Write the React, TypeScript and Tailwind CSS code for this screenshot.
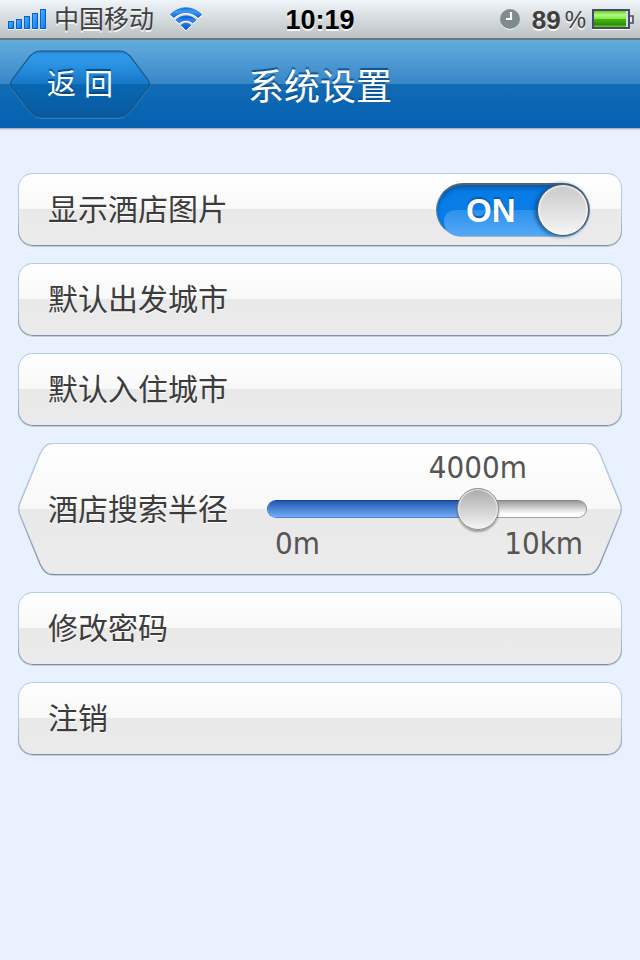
import { useId, useState } from "react";
import type { ReactNode } from "react";

const MAX_RADIUS = 10000;

/** The slider is finer at short distances than at long ones. */
function radiusAt(position: number) {
  return Math.round((MAX_RADIUS * Math.pow(position / 1000, 2.4)) / 100) * 100;
}

function SignalBars() {
  const heights = [7, 9, 12, 15, 19];
  return (
    <svg width="40" height="24" viewBox="0 0 40 24" aria-hidden="true">
      <defs>
        <linearGradient id="signal" x1="0" y1="0" x2="1" y2="1">
          <stop offset="0" stopColor="#4fb4ff" />
          <stop offset="1" stopColor="#0878ee" />
        </linearGradient>
      </defs>
      {heights.map((h, i) => (
        <g key={h}>
          <path d={`M${i * 8} 22.5h6`} stroke="#fff" strokeWidth="1" />
          <rect x={i * 8 + 0.5} y={21.5 - h} width="5" height={h} fill="url(#signal)" stroke="#0860cf" />
        </g>
      ))}
    </svg>
  );
}

function WifiIcon() {
  const shape = (
    <>
      <path d="M0.5 7.5C9.5-1.5 22.5-1.5 31.5 7.5L28.3 10.7C21 3.8 11 3.8 3.7 10.7Z" />
      <path d="M6 13C11.8 7.3 20.2 7.3 26 13L22.8 16.1C18.7 12.4 13.3 12.4 9.2 16.1Z" />
      <path d="M11.2 18.2C14 15.6 18 15.6 20.8 18.2L16 23Z" />
    </>
  );
  return (
    <svg width="32" height="25" viewBox="0 0 32 25" aria-hidden="true">
      <defs>
        <linearGradient id="wifi" gradientUnits="userSpaceOnUse" x1="0" y1="0" x2="0" y2="23">
          <stop offset="0" stopColor="#1269d8" />
          <stop offset="0.2" stopColor="#36a0f6" />
          <stop offset="0.45" stopColor="#1464e0" />
          <stop offset="0.6" stopColor="#2d8ef4" />
          <stop offset="1" stopColor="#0648cc" />
        </linearGradient>
      </defs>
      <g fill="#fff" transform="translate(0 1.5)">{shape}</g>
      <g fill="url(#wifi)" stroke="#0756cd" strokeWidth="0.6">{shape}</g>
    </svg>
  );
}

function ClockIcon() {
  return (
    <svg width="20" height="22" viewBox="0 0 20 22" aria-hidden="true">
      <circle cx="10" cy="12" r="9.7" fill="#fff" />
      <circle cx="10" cy="11" r="10" fill="#7f8b8d" />
      <path d="M11 4V11H6" fill="none" stroke="#fff" strokeWidth="2.2" />
    </svg>
  );
}

function BatteryIcon() {
  return (
    <svg width="42" height="22" viewBox="0 0 42 22" aria-hidden="true">
      <defs>
        <linearGradient id="battery" x1="0" y1="0" x2="0" y2="1">
          <stop offset="0" stopColor="#63d128" />
          <stop offset="0.25" stopColor="#b5fa80" />
          <stop offset="0.48" stopColor="#83e748" />
          <stop offset="0.52" stopColor="#41bb0c" />
          <stop offset="0.85" stopColor="#2d8d04" />
          <stop offset="1" stopColor="#74ce3e" />
        </linearGradient>
      </defs>
      <path d="M0 21.5h38" stroke="#fff" strokeWidth="1" />
      <rect x="1" y="2" width="36" height="18" fill="#d5d9e2" stroke="#454b66" strokeWidth="2" />
      <rect x="2" y="3" width="32" height="16" fill="url(#battery)" />
      <path d="M38 8h3v7h-3" fill="#e4e6ec" stroke="#454b66" strokeWidth="1.6" />
    </svg>
  );
}

function StatusBar() {
  return (
    <div className="grid h-10 grid-cols-[1fr_auto_1fr] items-center border-b-2 border-[#6f7578] bg-linear-to-b from-[#eff5f8] to-[#bcc1c4] px-2 text-[#3f3f3f] [text-shadow:0_2px_0_#f4f6f7]">
      <div className="flex items-center">
        <SignalBars />
        <span className="ml-1.5 text-[25px]/8">中国移动</span>
        <span className="ml-4">
          <WifiIcon />
        </span>
      </div>
      <time className="pt-0.5 text-[27px]/8 font-bold text-black">10:19</time>
      <div className="-mr-0.5 flex items-center justify-end">
        <ClockIcon />
        <span className="ml-3 pt-0.5 text-[26px]/8 font-bold">89</span>
        <span className="mr-1.5 ml-1 pt-0.5 text-[24px]/8">%</span>
        <BatteryIcon />
      </div>
    </div>
  );
}

function BackButton() {
  return (
    <button type="button" className="relative h-[68px] w-[142px] pt-1 text-[29px] text-white [text-shadow:0_-2px_1px_#064a86]">
      <svg className="absolute inset-0" width="142" height="70" viewBox="0 0 142 70" aria-hidden="true">
        <defs>
          <linearGradient id="back" x1="0" y1="0" x2="0" y2="1">
            <stop offset="0" stopColor="#2580cc" />
            <stop offset="0.06" stopColor="#3098e9" />
            <stop offset="0.2" stopColor="#2b93e4" />
            <stop offset="0.5" stopColor="#1577c4" />
            <stop offset="0.51" stopColor="#0767b2" />
            <stop offset="1" stopColor="#0a5a9f" />
          </linearGradient>
        </defs>
        <path d="M32 1H110Q116 1 121 6L139 30Q142 34 139 38L121 61Q116 67 110 67H32Q26 67 21 61L3 38Q0 34 3 30L21 6Q26 1 32 1Z" fill="none" stroke="#5aa7e0" strokeOpacity="0.6" transform="translate(0 1.3)" />
        <path d="M32 1H110Q116 1 121 6L139 30Q142 34 139 38L121 61Q116 67 110 67H32Q26 67 21 61L3 38Q0 34 3 30L21 6Q26 1 32 1Z" fill="url(#back)" stroke="#1b557f" strokeWidth="1.2" />
      </svg>
      <span className="relative">返 回</span>
    </button>
  );
}

function Header() {
  return (
    <header className="grid h-[89px] grid-cols-[1fr_auto_1fr] items-center border-b border-[#aab0ba] bg-[linear-gradient(#63acdd,#3787c8_50%,#136bb5_50%,#0361b0)] px-[9px] shadow-[0_1px_1px_#d5dbe6]">
      <BackButton />
      <h1 className="pt-2 text-[36px]/[48px] text-white [text-shadow:0_-2px_1px_#0b528f]">系统设置</h1>
    </header>
  );
}

const panel =
  "flex h-[73px] w-full items-center rounded-[15px] border border-transparent pr-[31px] pl-[29px] text-left text-[30px] text-[#3c3c3c] shadow-[0_1px_0_#c3ccdb] [background:linear-gradient(#fff,#f8f8f8_50%,#e9e9e9_50%,#ebebeb)_padding-box,linear-gradient(#b2cdec,#b2c5da_60%,#7f8fa3)_border-box] [text-shadow:0_1px_0_#fff]";

function SettingButton({ children }: { children: ReactNode }) {
  return (
    <button type="button" className={panel}>
      {children}
    </button>
  );
}

function PictureSetting() {
  const [on, setOn] = useState(true);
  return (
    <label className={`${panel} justify-between`}>
      <span>显示酒店图片</span>
      <span className="relative block h-[54px] w-[154px] shrink-0">
        <input
          type="checkbox"
          role="switch"
          checked={on}
          onChange={(e) => setOn(e.target.checked)}
          className="peer absolute inset-0 size-full cursor-pointer appearance-none rounded-full border-x border-t-2 border-b border-x-[#71818f] border-t-[#59626b] border-b-[#a2b6c8] bg-[#9aa3ad] shadow-[inset_0_4px_5px_-1px_#0558a8] checked:bg-[#087ce7]"
        />
        <span className="pointer-events-none absolute inset-x-2 top-[27px] bottom-px rounded-tl-[20px] rounded-b-[27px] bg-linear-to-b from-[#2b91ed] to-[#54a8f5]" />
        <span className="pointer-events-none absolute top-1/2 left-[30px] -translate-y-1/2 text-[33px] leading-none font-bold text-white [text-shadow:0_-2px_1px_#075da9]">
          {on ? "ON" : ""}
        </span>
        <span className="pointer-events-none absolute top-px left-px size-[52px] rounded-full border border-[#4f5963] bg-linear-to-b from-[#cacaca] to-[#f5f5f5] shadow-[inset_0_0_2px_1px_#fff] peer-checked:left-[101px] peer-checked:shadow-[inset_0_0_2px_1px_#fff,-2px_0_4px_#075296]" />
      </span>
    </label>
  );
}

function HexCap({ side }: { side: "left" | "right" }) {
  return (
    <svg className={side === "right" ? "-scale-x-100" : ""} width="36" height="133" viewBox="0 0 36 133" aria-hidden="true">
      <defs>
        <linearGradient id={`fill-${side}`} gradientUnits="userSpaceOnUse" x1="0" y1="0" x2="0" y2="132">
          <stop offset="0" stopColor="#fff" />
          <stop offset="0.5" stopColor="#f8f8f8" />
          <stop offset="0.5" stopColor="#e9e9e9" />
          <stop offset="1" stopColor="#ebebeb" />
        </linearGradient>
        <linearGradient id={`edge-${side}`} gradientUnits="userSpaceOnUse" x1="0" y1="0" x2="0" y2="132">
          <stop offset="0" stopColor="#b2cdec" />
          <stop offset="0.5" stopColor="#a9bdd5" />
          <stop offset="1" stopColor="#7f8fa3" />
        </linearGradient>
      </defs>
      <path
        d="M36 0.5H33Q27 0.5 22 11L1.5 61Q0 66 1.5 71L22 121Q27 131.5 33 131.5H36"
        fill={`url(#fill-${side})`}
        stroke={`url(#edge-${side})`}
        strokeWidth="1.4"
      />
    </svg>
  );
}

function RadiusSetting() {
  const id = useId();
  const [position, setPosition] = useState(683);
  const percent = position / 10;
  const thumb = `calc(21px + (100% - 42px) * ${percent / 100})`;
  return (
    <div className="relative h-[132px]">
      <div className="absolute inset-0 flex" aria-hidden="true">
        <HexCap side="left" />
        <div className="flex-1 border-t border-b border-t-[#b2cdec] border-b-[#7f8fa3] bg-[linear-gradient(#fff,#f8f8f8_50%,#e9e9e9_50%,#ebebeb)] shadow-[0_1px_0_#c3ccdb]" />
        <HexCap side="right" />
      </div>
      <div className="relative flex h-full items-center gap-[39px] pr-[35px] pl-[30px]">
        <label htmlFor={id} className="shrink-0 text-[30px] text-[#3c3c3c] [text-shadow:0_1px_0_#fff]">
          酒店搜索半径
        </label>
        <div className="flex-1 pb-2 font-['DejaVu_Sans_Condensed','DejaVu_Sans',sans-serif] text-[31px]/[34px] text-[#555]">
          <div className="relative h-[34px]">
            <output htmlFor={id} className="absolute -translate-x-1/2" style={{ left: thumb }}>
              {radiusAt(position)}m
            </output>
          </div>
          <input
            id={id}
            type="range"
            min="0"
            max="1000"
            value={position}
            onChange={(e) => setPosition(Number(e.target.value))}
            style={{ backgroundSize: `${percent}% 100%, 100% 100%, ${percent}% 100%, 100% 100%` }}
            className="mt-4 mb-2 block h-[18px] w-full cursor-pointer appearance-none rounded-full border border-transparent bg-no-repeat [background-clip:padding-box,padding-box,border-box,border-box] [background-image:linear-gradient(#2558ad,#4a81d3_50%,#72abf4),linear-gradient(#999,#dadada_50%,#fff_80%),linear-gradient(#0d459c,#4b86d6),linear-gradient(#858585,#a5a5a5)] [background-origin:padding-box,padding-box,border-box,border-box] [&::-webkit-slider-thumb]:size-[42px] [&::-webkit-slider-thumb]:appearance-none [&::-webkit-slider-thumb]:rounded-full [&::-webkit-slider-thumb]:border [&::-webkit-slider-thumb]:border-[#8c8c8c] [&::-webkit-slider-thumb]:bg-linear-to-b [&::-webkit-slider-thumb]:from-[#ababab] [&::-webkit-slider-thumb]:to-[#f5f5f5] [&::-webkit-slider-thumb]:shadow-[inset_0_0_1px_1px_#f4f4f4,0_2px_2px_#0005]"
          />
          <div className="flex justify-between pr-1 pl-2">
            <span>0m</span>
            <span>10km</span>
          </div>
        </div>
      </div>
    </div>
  );
}

export default function App() {
  return (
    <div className="min-h-screen bg-[#e9f0fe] font-['Liberation_Sans','Noto_Sans_CJK_SC',sans-serif]">
      <StatusBar />
      <Header />
      <main className="flex flex-col gap-[17px] px-[18px] pt-11 pb-8">
        <PictureSetting />
        <SettingButton>默认出发城市</SettingButton>
        <SettingButton>默认入住城市</SettingButton>
        <RadiusSetting />
        <SettingButton>修改密码</SettingButton>
        <SettingButton>注销</SettingButton>
      </main>
    </div>
  );
}
